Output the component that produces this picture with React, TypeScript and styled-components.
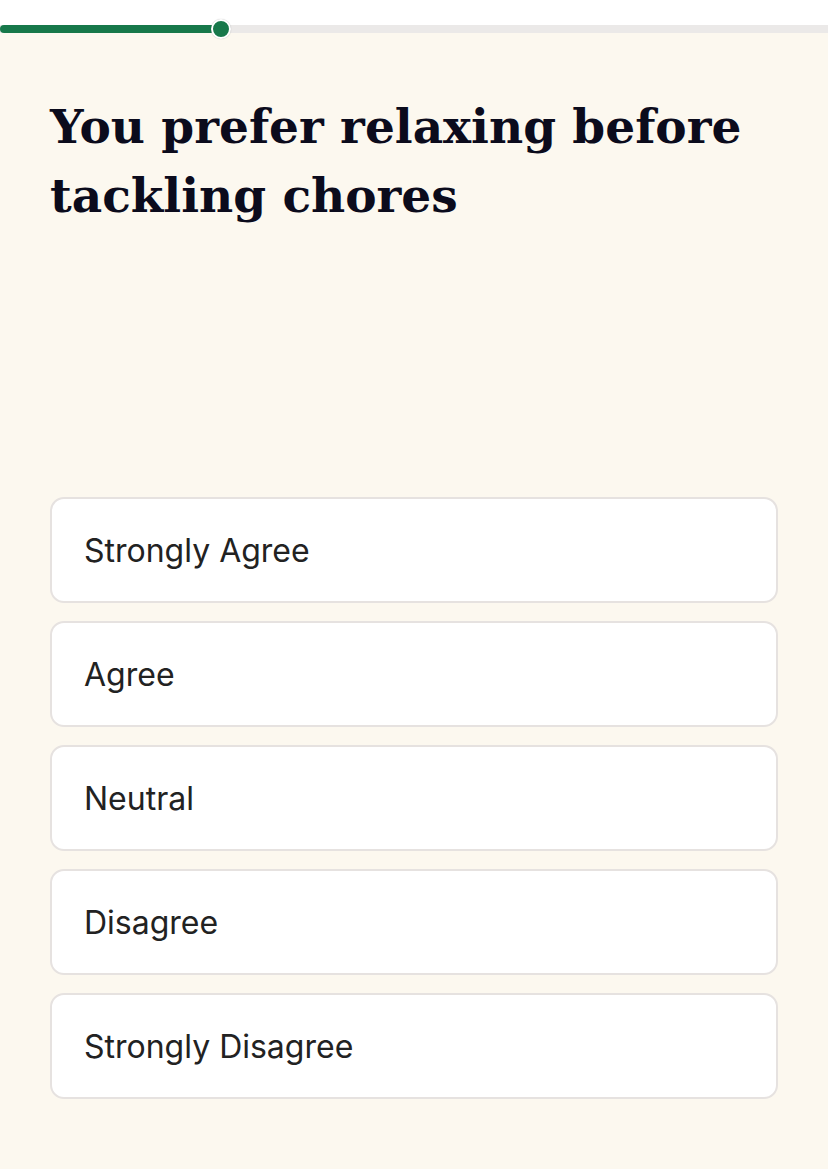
import React from 'react';
import styled, { createGlobalStyle } from 'styled-components';

const GlobalStyle = createGlobalStyle`
  html, body {
    margin: 0;
    padding: 0;
    background: #fcf8ef;
  }
  * { box-sizing: border-box; }
`;

const options = ['Strongly Agree', 'Agree', 'Neutral', 'Disagree', 'Strongly Disagree'];

function App() {
  const progress = 221;
  return (
    <Page>
      <GlobalStyle />
      <TopBar>
        <Track>
          <Fill style={{ width: progress }} />
          <Thumb style={{ left: progress }} />
        </Track>
      </TopBar>
      <Content>
        <Question>You prefer relaxing before tackling chores</Question>
        <Options>
          {options.map((o) => (
            <OptionButton key={o}>{o}</OptionButton>
          ))}
        </Options>
      </Content>
    </Page>
  );
}

export default App;

const Page = styled.div`
  min-height: 1169px;
  background: #fcf8ef;
`;

const TopBar = styled.div`
  background: #ffffff;
  padding-top: 25px;
`;

const Track = styled.div`
  position: relative;
  height: 8px;
  background: #ebe9e8;
`;

const Fill = styled.div`
  height: 100%;
  background: #17784a;
  border-radius: 4px;
`;

const Thumb = styled.div`
  position: absolute;
  top: 50%;
  width: 20px;
  height: 20px;
  margin-left: -10px;
  margin-top: -10px;
  border-radius: 50%;
  background: #17784a;
  border: 2px solid #ffffff;
  box-shadow: 0 0 1px rgba(0, 0, 0, 0.3);
`;

const Content = styled.div`
  padding: 0 50px;
`;

const Question = styled.h1`
  margin: 59px 0 0;
  font-family: 'DejaVu Serif', 'Liberation Serif', serif;
  font-weight: 700;
  font-size: 47px;
  line-height: 69px;
  color: #0b0b1c;
  min-height: 405px;
`;

const Options = styled.div`
  display: flex;
  flex-direction: column;
  gap: 18px;
`;

const OptionButton = styled.button`
  display: flex;
  align-items: center;
  width: 100%;
  height: 106px;
  padding: 0 32px;
  background: #ffffff;
  border: 2px solid #e6e2e0;
  border-radius: 14px;
  font-family: Inter, 'Noto Sans', sans-serif;
  font-size: 32px;
  color: #222222;
  text-align: left;
  cursor: pointer;
`;
